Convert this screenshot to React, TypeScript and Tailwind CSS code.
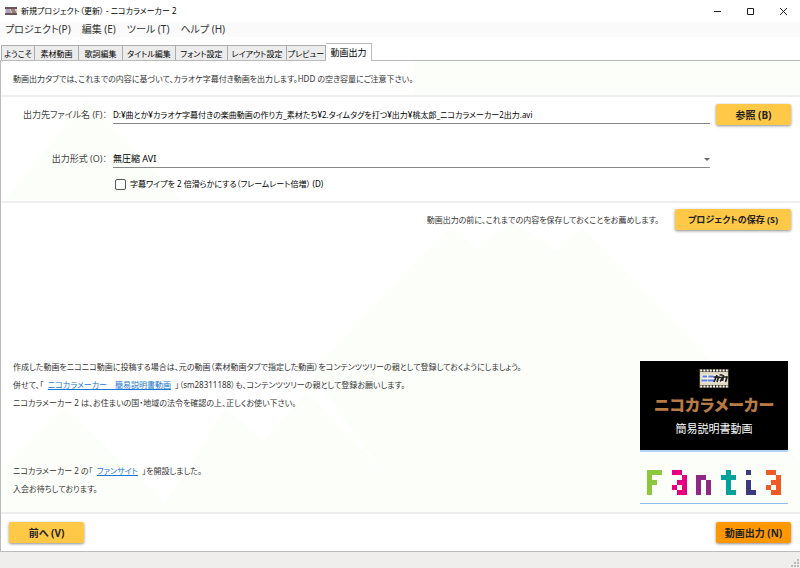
import React from "react";

const tabs = ["ようこそ", "素材動画", "歌詞編集", "タイトル編集", "フォント設定", "レイアウト設定", "プレビュー"];
const tabWidths = ["w-[34px]", "w-[44px]", "w-[44px]", "w-[53px]", "w-[52px]", "w-[59px]", "w-[39px]"];
const menus = ["プロジェクト(P)", "編集 (E)", "ツール (T)", "ヘルプ (H)"];

const letters = [
  { color: "#8dc63f", x: 7, rows: ["###", "#..", "##.", "#..", "#.."] },
  { color: "#e4007f", x: 32, rows: ["##.", "..#", ".##", "#.#", ".##"] },
  { color: "#8e2a86", x: 56, rows: ["...", "##.", "#.#", "#.#", "#.#"] },
  { color: "#00a29a", x: 81, rows: [".#.", "###", ".#.", ".#.", ".##"] },
  { color: "#3a3a80", x: 106, rows: ["#..", "...", "#..", "#..", "##."] },
  { color: "#f15a24", x: 126, rows: ["##.", "..#", ".##", "#.#", ".##"] },
];

function Raised({ children, className }: { children: React.ReactNode; className: string }) {
  return (
    <button
      type="button"
      className={`h-[21px] shrink-0 rounded-xs text-center leading-[22px] font-bold text-[#222] shadow-[0_1px_3px_rgba(0,0,0,0.45)] ${className}`}
    >
      {children}
    </button>
  );
}

function AppIcon() {
  return (
    <svg className="h-2 w-3" viewBox="0 0 12 8" aria-hidden="true">
      <rect width="12" height="8" fill="#6d5560" />
      <rect y="2" width="12" height="4" fill="#e8c9a8" />
      <path d="M1 3h4M1 5h5" stroke="#6a7fe0" />
      <path d="M6 3h4M7 5h4" stroke="#4a3a5a" />
    </svg>
  );
}

function Film({ className }: { className: string }) {
  return (
    <svg className={className} viewBox="0 0 30 19" aria-hidden="true">
      <rect width="30" height="19" fill="#3b3322" />
      <rect x="1" y="3" width="28" height="13" fill="#ded7c2" />
      <rect x="2.5" y="5.5" width="25" height="8" fill="#f6f2e8" />
      {Array.from({ length: 9 }, (_, i) => (
        <g key={i} fill="#fff">
          <rect x={1.2 + i * 3.2} y="0.5" width="2" height="2" />
          <rect x={1.2 + i * 3.2} y="16.5" width="2" height="2" />
        </g>
      ))}
      <path d="M3.5 7.5h4.500M2.500 11.500h6M9.500 7.500h5M9 11.500h6" stroke="#5d7be0" strokeWidth="1.8" fill="none" />
      <path d="M14.500 8h5l-1.500 5M18 6l-3 7M20.500 6h3M20 8.500h4l-3 4M24.500 6l-1 6M24 8h4l-1.500 5" stroke="#1c1c1c" strokeWidth="1.700" fill="none" />
    </svg>
  );
}

function Mountains() {
  return (
    <svg className="absolute inset-0 h-full w-full" viewBox="0 0 798 489" preserveAspectRatio="none" aria-hidden="true">
      <g fill="#fcfefa">
        <path d="M412 34V0H798V34Z" />
        <path d="M5 139L85 40L180 139Z" />
        <path d="M427 188L450 166L475 188L510 160L556 190L580 166L730 320L798 400V452H395V430L310 310Z" />
        <path d="M0 410L63 346L164 440L225 346L262 380L305 330L420 452H0Z" />
      </g>
    </svg>
  );
}

export default function App() {
  return (
    <div
      lang="ja"
      className="flex min-h-screen flex-col bg-white font-['Noto_Sans','Noto_Sans_CJK_JP',sans-serif] text-[8px] leading-[18px] text-[#333] [font-feature-settings:'palt']"
    >
      <header className="flex h-[22px] items-center gap-1 pr-3 pl-[5px]">
        <AppIcon />
        <h1 className="flex-1 text-black">新規プロジェクト（更新） - ニコカラメーカー 2</h1>
        <div className="flex items-center gap-6">
          <button type="button" aria-label="最小化"><svg className="size-[9px]" viewBox="0 0 9 9"><path d="M1 4.5h7" stroke="#222" /></svg></button>
          <button type="button" aria-label="最大化"><svg className="size-[9px]" viewBox="0 0 9 9"><path d="M1.5 1.5h6v6h-6z" stroke="#222" fill="none" /></svg></button>
          <button type="button" aria-label="閉じる"><svg className="size-[9px]" viewBox="0 0 9 9"><path d="M1 1l7 7M8 1l-7 7" stroke="#222" /></svg></button>
        </div>
      </header>
      <nav className="flex h-[15px] items-center gap-[11px] bg-[#fafafa] pl-[5px] text-[10px] leading-[15px]">
        {menus.map((m) => <button type="button" key={m}>{m}</button>)}
      </nav>
      <div role="tablist" className="flex h-6 items-end border-b border-[#bbb] pl-px text-black">
        {tabs.map((t, i) => (
          <button key={t} role="tab" type="button" className={`h-[15px] border border-b-0 border-[#acacac] bg-[#ececec] text-center leading-[15px] whitespace-nowrap not-first:border-l-0 ${tabWidths[i]}`}>
            {t}
          </button>
        ))}
        <button role="tab" type="button" aria-selected="true" className="-mb-px h-[18px] w-[46px] border border-b-0 border-[#bbb] bg-white text-[9px] leading-4 not-first:border-l-0">
          動画出力
        </button>
      </div>
      <main className="relative flex flex-1 flex-col border-b border-l border-[#bbb]">
        <Mountains />
        <div className="relative flex flex-1 flex-col">
          <p className="border-b-2 border-[#eee] pt-[9px] pb-[7px] pl-3">
            動画出力タブでは、これまでの内容に基づいて、カラオケ字幕付き動画を出力します。HDD の空き容量にご注意下さい。
          </p>
          <form className="grid grid-cols-[106px_1fr_75px] gap-x-[6px] border-b-2 border-[#eee] pt-[7px] pr-[9px] pb-2 text-black" onSubmit={(e) => e.preventDefault()}>
            <label htmlFor="file" className="text-right text-[9px] leading-[22px] text-[#444]">出力先ファイル名 (F)：</label>
            <input id="file" className="h-5 min-w-0 border-b border-[#888] bg-transparent pt-0.5 outline-none" defaultValue="D:¥曲とか¥カラオケ字幕付きの楽曲動画の作り方_素材たち¥2.タイムタグを打つ¥出力¥桃太郎_ニコカラメーカー2出力.avi" />
            <Raised className="bg-[#ffc846] text-[10px]">参照 (B)</Raised>
            <label htmlFor="format" className="mt-6 text-right text-[9px] text-[#444]">出力形式 (O)：</label>
            <div className="relative mt-6 text-[9px]">
              <select id="format" className="h-[18px] w-full appearance-none border-b border-[#888] bg-transparent outline-none">
                <option>無圧縮 AVI</option>
              </select>
              <svg className="pointer-events-none absolute top-2 right-0 h-[3px] w-[6px]" viewBox="0 0 6 3" aria-hidden="true"><path d="M0 0h6l-3 3z" fill="#666" /></svg>
            </div>
            <label className="col-start-2 mt-[7px] flex items-center gap-1 pl-0.5">
              <input type="checkbox" className="size-[11px] appearance-none rounded-xs border border-[#555] bg-white" />
              字幕ワイプを 2 倍滑らかにする（フレームレート倍増） (D)
            </label>
          </form>
          <section className="flex flex-1 flex-col justify-between border-b-2 border-[#eee] pt-1.5 pr-[9px] pb-2">
            <div className="flex items-center justify-end gap-4">
              <p>動画出力の前に、これまでの内容を保存しておくことをお薦めします。</p>
              <Raised className="w-[116px] bg-[#ffc846] text-[9px]">プロジェクトの保存 (S)</Raised>
            </div>
            <div className="flex justify-between pr-[3px] pl-3">
              <div className="flex flex-col justify-between pb-1.5">
                <div>
                  <p>作成した動画をニコニコ動画に投稿する場合は、元の動画（素材動画タブで指定した動画）をコンテンツツリーの親として登録しておくようにしましょう。</p>
                  <p>併せて、「&nbsp; <a href="#manual" className="text-[#1976d2] underline">ニコカラメーカー　簡易説明書動画</a> &nbsp;」（sm28311188）も、コンテンツツリーの親として登録お願いします。</p>
                  <p>ニコカラメーカー 2 は、お住まいの国・地域の法令を確認の上、正しくお使い下さい。</p>
                </div>
                <div>
                  <p>ニコカラメーカー 2 の「&nbsp; <a href="#fan" className="text-[#1976d2] underline">ファンサイト</a> &nbsp;」を開設しました。</p>
                  <p>入会お待ちしております。</p>
                </div>
              </div>
              <div className="flex w-[148px] shrink-0 flex-col gap-[18px] pt-[3px]">
                <a href="#manual" className="flex h-[91px] flex-col items-center border-b-2 border-[#b5d3f5] bg-black pt-2">
                  <Film className="h-[19px] w-[30px]" />
                  <span className="mt-[5px] text-base leading-6 font-black text-[#b87b45]">ニコカラメーカー</span>
                  <span className="mt-0.5 text-[11px] leading-5 text-white">簡易説明書動画</span>
                </a>
                <a href="#fan" aria-label="Fantia" className="border-b border-[#8fbcec] pb-2">
                  <svg className="block h-[25px] w-full" viewBox="0 0 148 25" shapeRendering="crispEdges" aria-hidden="true">
                    {letters.map((l) => l.rows.map((r, y) => [...r].map((c, x) => c === "#" && (
                      <rect key={`${l.x}-${x}-${y}`} x={l.x + x * 5} y={y * 5} width="5" height="5" fill={l.color} />
                    ))))}
                  </svg>
                </a>
              </div>
            </div>
          </section>
          <div className="flex justify-between bg-white py-2 pr-[9px] pl-2">
            <Raised className="w-[75px] bg-[#ffc846] text-[10px]">前へ (V)</Raised>
            <Raised className="w-[75px] bg-[#ff9800] text-[10px]">動画出力 (N)</Raised>
          </div>
        </div>
      </main>
      <footer className="flex h-4 items-end justify-end bg-[#f0eded]">
        <svg className="size-[9px]" viewBox="0 0 9 9" fill="#bbb" aria-hidden="true">
          <path d="M6 0h2v2h-2zM3 3h2v2h-2zM6 3h2v2h-2zM0 6h2v2h-2zM3 6h2v2h-2zM6 6h2v2h-2z" />
        </svg>
      </footer>
    </div>
  );
}
